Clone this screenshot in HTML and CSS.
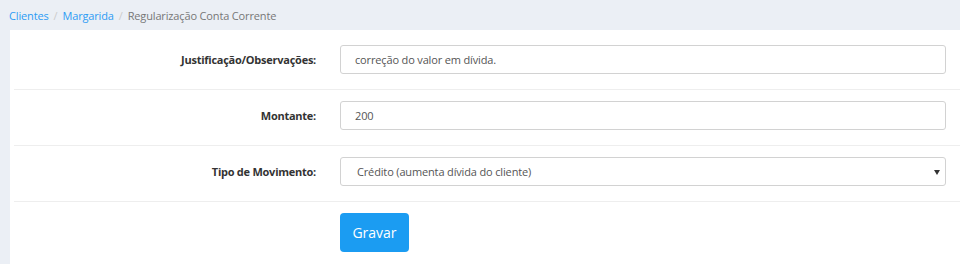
FILE: index.html
```html
<!DOCTYPE html>
<html lang="pt">
  <head>
    <meta charset="UTF-8" />
    <meta name="viewport" content="width=device-width, initial-scale=1.0" />
    <title>Regularização Conta Corrente</title>
    <link rel="stylesheet" href="styles.css">
  </head>
  <body>
    <ol class="breadcrumb">
      <li><a href="#">Clientes</a></li>
      <li><a href="#">Margarida</a></li>
      <li class="active">Regularização Conta Corrente</li>
    </ol>
    <div class="card">
      <form class="form">
        <div class="row">
          <label class="label" for="obs">Justificação/Observações:</label>
          <input class="control" id="obs" type="text" value="correção do valor em dívida." />
        </div>
        <div class="row">
          <label class="label" for="montante">Montante:</label>
          <input class="control" id="montante" type="text" value="200" />
        </div>
        <div class="row">
          <label class="label" for="tipo">Tipo de Movimento:</label>
          <div class="select-wrap">
            <select class="control select" id="tipo">
              <option>Crédito (aumenta dívida do cliente)</option>
              <option>Débito (diminui dívida do cliente)</option>
            </select>
          </div>
        </div>
        <div class="row last">
          <span></span>
          <div><button class="btn" type="button">Gravar</button></div>
        </div>
      </form>
    </div>
  </body>
</html>
```

FILE: styles.css
```css
body {
  margin: 0;
  padding: 0;
  background: #ebeff5;
  font-family: "Open Sans", "Noto Sans", sans-serif;
  font-size: 12px;
  color: #333;
}
.breadcrumb {
  display: flex;
  list-style: none;
  margin: 0;
  padding: 0 0 0 9px;
  height: 30px;
  align-items: center;
  font-size: 11px;
  letter-spacing: -0.15px;
}
.breadcrumb li + li::before {
  content: "/";
  color: #ccc;
  padding: 0 5px;
}
.breadcrumb a {
  color: #2d9cf4;
  text-decoration: none;
}
.breadcrumb .active {
  color: #777;
}
.card {
  margin-left: 10px;
  background: #fff;
  padding: 4px 0 0 4px;
  height: 230px;
}
.row {
  display: grid;
  grid-template-columns: 302px 1fr;
  column-gap: 24px;
  align-items: center;
  padding: 11px 14px 15px 0;
  border-bottom: 1px solid #eeeeee;
}
.row.last {
  border-bottom: none;
}
.label {
  text-align: right;
  font-weight: 700;
  font-size: 11px;
  letter-spacing: -0.25px;
}
.control {
  box-sizing: border-box;
  width: 100%;
  height: 29px;
  border: 1px solid #d2d2d2;
  border-radius: 3px;
  padding: 0 14px;
  font-family: inherit;
  font-size: 11px;
  letter-spacing: -0.15px;
  color: #555;
  background: #fff;
  outline: none;
}
.select-wrap {
  position: relative;
}
.select {
  appearance: none;
  -webkit-appearance: none;
  padding-left: 16px;
}
.select-wrap::after {
  content: "";
  position: absolute;
  right: 6px;
  top: 13px;
  border-left: 3px solid transparent;
  border-right: 3px solid transparent;
  border-top: 5px solid #333;
  pointer-events: none;
}
.btn {
  height: 39px;
  width: 69px;
  border: none;
  border-radius: 4px;
  background: #1b9cf2;
  color: #fff;
  font-family: inherit;
  font-size: 14px;
  cursor: pointer;
}
```
